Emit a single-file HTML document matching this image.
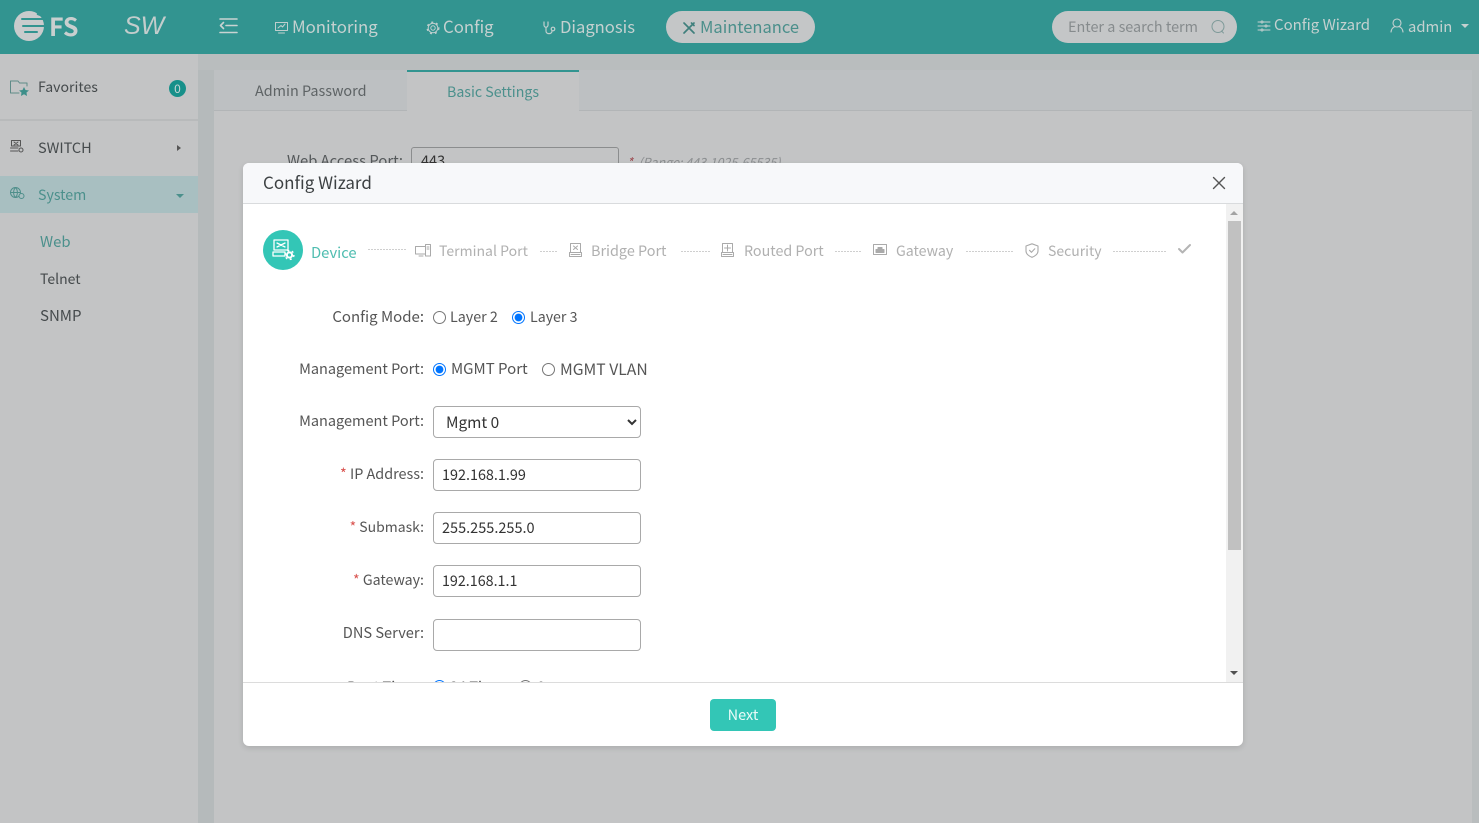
<!DOCTYPE html>
<html><head><meta charset="utf-8"><style>
html,body{margin:0;padding:0;width:1479px;height:823px;overflow:hidden;background:#c1c3c5}
*{box-sizing:border-box}
body{font-family:"Noto Sans CJK SC","Liberation Sans",sans-serif;position:relative}
.a{position:absolute}
.t{position:absolute;white-space:nowrap;line-height:20px;height:20px}
svg{position:absolute;overflow:visible;fill:none;stroke-linecap:round;stroke-linejoin:round}
.in{position:absolute;left:433px;width:208px;height:32px;border:1px solid #a9a9a9;border-radius:4px;background:#fff;color:#333;font:14.400px/30px "Noto Sans CJK SC","Liberation Sans",sans-serif;padding-left:8px}
.lb{position:absolute;right:1055px;color:#555;font-size:15px;line-height:20px;white-space:nowrap}
.lb i{color:#d9534f;font-style:normal}
input[type=radio]{position:absolute;margin:0;width:13px;height:13px;accent-color:#0075ff}
.d{position:absolute;top:251px;height:1px;background:repeating-linear-gradient(90deg,#cfcfcf 0 2px,transparent 2px 3px)}
.st{color:#b0b0b0;font-size:14.200px;top:241px}
</style></head><body>
<!-- header -->
<div class="a" style="left:0;top:0;width:1479px;height:54px;background:#329490"></div>
<svg style="left:14px;top:11px" width="32" height="30" viewBox="0 0 32 30"><circle cx="15" cy="15" r="15" fill="#c9cbcc"/><path d="M8 8H32M9 15H32M11 21H23" stroke="#329490" stroke-width="2"/><path d="M24 3L32 6" stroke="#329490" stroke-width="2.500"/></svg>
<div class="t" style="left:49px;top:16px;font-size:25px;font-weight:700;color:#c9cfcf">FS</div>
<div class="t" style="left:124px;top:16px;font-size:25px;font-style:italic;color:#c3cdcc;font-family:'Liberation Sans',sans-serif">SW</div>
<svg style="left:219px;top:18px" width="19" height="16" viewBox="0 0 19 16" stroke="#c9d3d2" stroke-width="1.600"><path d="M1 1H18M7 7.500H18M1 14.500H18M4.500 4.500L1.500 7.500L4.500 10.500"/></svg>
<svg style="left:275px;top:21px" width="13" height="13" viewBox="0 0 13 13" stroke="#c0cfce" stroke-width="1"><path d="M.5 1.500H12.500V9.500H.5ZM3 7L6 4.500L7.500 6L10 3M3.500 12H9.500"/></svg>
<div class="t" style="left:292px;top:16px;font-size:16.800px;color:#c5d1d0">Monitoring</div>
<svg style="left:426px;top:21px" width="14" height="14" viewBox="0 0 14 14" stroke="#c0cfce" stroke-width="1"><circle cx="7" cy="7" r="2.200"/><circle cx="7" cy="7" r="4.800"/><circle cx="7" cy="7" r="5.800" stroke-width="1.400" stroke-linecap="butt" stroke-dasharray="2 3.070"/></svg>
<div class="t" style="left:443px;top:16px;font-size:16.800px;color:#c5d1d0">Config</div>
<svg style="left:543px;top:21px" width="14" height="14" viewBox="0 0 14 14" stroke="#c0cfce" stroke-width="1.200"><path d="M1 1L1 4C1 7 5 7 5 4L5 1M3 7V10C3 13.500 9 13.500 9 10"/><circle cx="10" cy="8" r="1.800"/></svg>
<div class="t" style="left:560px;top:16px;font-size:16.600px;color:#c5d1d0">Diagnosis</div>
<div class="a" style="left:666px;top:11px;width:149px;height:32px;border-radius:16px;background:#c4c6c7"></div>
<svg style="left:683px;top:22px" width="12" height="12" viewBox="0 0 12 12" stroke="#3f7f7c" stroke-width="1.700"><path d="M1 1L11 11M11 1L1 11M8.500 1L11 3.500"/></svg>
<div class="t" style="left:700px;top:16px;font-size:16.500px;color:#4b8f8b">Maintenance</div>
<div class="a" style="left:1052px;top:11px;width:185px;height:32px;border-radius:16px;background:#c4c6c7"></div>
<div class="t" style="left:1068px;top:17px;font-size:14.400px;color:#868b8d">Enter a search term</div>
<svg style="left:1211px;top:20px" width="14" height="14" viewBox="0 0 14 14" stroke="#7e9a99" stroke-width="1"><circle cx="7" cy="6.500" r="6"/><path d="M10.500 11L12.500 13"/></svg>
<svg style="left:1258px;top:20px" width="12" height="12" viewBox="0 0 12 12" stroke="#c5d1d0" stroke-width="1"><path d="M0 2H12M0 6H12M0 10H12"/><circle cx="4" cy="2" r="1" fill="#329490"/><circle cx="8" cy="6" r="1" fill="#329490"/><circle cx="4" cy="10" r="1" fill="#329490"/></svg>
<div class="t" style="left:1274px;top:15px;font-size:15px;color:#c5d1d0">Config Wizard</div>
<svg style="left:1390px;top:18px" width="14" height="15" viewBox="0 0 14 15" stroke="#c5d1d0" stroke-width="1.100"><circle cx="7" cy="5" r="4"/><path d="M1 14C1.500 10.500 3.500 9 5 8.500M13 14C12.500 10.500 10.500 9 9 8.500"/></svg>
<div class="t" style="left:1408px;top:17px;font-size:14.800px;color:#c5d1d0">admin</div>
<div class="a" style="left:1461px;top:24px;border:4px solid transparent;border-top-color:#c5d1d0;border-bottom:0"></div>

<!-- sidebar -->
<div class="a" style="left:0;top:54px;width:198px;height:769px;background:#c3c4c5"></div>
<div class="a" style="left:198px;top:54px;width:16px;height:769px;background:#b5babb"></div>
<div class="a" style="left:198px;top:54px;width:1281px;height:16px;background:#b9bdbe"></div>
<div class="a" style="left:0;top:119px;width:198px;height:2px;background:#b8babb"></div>
<svg style="left:10px;top:80px" width="20" height="16" viewBox="0 0 20 16" stroke="#5f8b88" stroke-width="1"><path d="M.5 1H8L9.500 3H17V6M.5 1V13H9"/><path d="M14 7L15.500 10L19 10.500L16.500 12.500L17 16L14 14.300L11 16L11.500 12.500L9 10.500L12.500 10Z" fill="#3d8f8a" stroke="none"/></svg>
<div class="t" style="left:38px;top:77px;font-size:14.100px;color:#454a4c">Favorites</div>
<div class="a" style="left:169px;top:80px;width:17px;height:17px;border-radius:50%;background:#17908a;color:#c7d6d5;font-size:12px;line-height:17px;text-align:center">0</div>
<svg style="left:10px;top:140px" width="14" height="13" viewBox="0 0 14 13" stroke="#555" stroke-width="1"><path d="M1.500 .5H10.500V6H1.500ZM.5 8H8M.5 11H8M4 2L8 5M8 2L4 5"/><circle cx="11" cy="10" r="2"/></svg>
<div class="t" style="left:38px;top:138px;font-size:14.500px;color:#454a4c">SWITCH</div>
<div class="a" style="left:177px;top:145px;border:3px solid transparent;border-left:4px solid #555;border-right:0"></div>
<div class="a" style="left:0;top:176px;width:198px;height:37px;background:#a8bfc1"></div>
<svg style="left:10px;top:187px" width="15" height="13" viewBox="0 0 15 13" stroke="#4f8f8b" stroke-width="1"><circle cx="5.500" cy="5.500" r="5"/><path d="M.5 5.500H10.500M5.500 .5C3 3 3 8 5.500 10.500M5.500 .5C8 3 8 8 5.500 10.500"/><circle cx="11.500" cy="9" r="2.500" fill="#a8bfc1"/></svg>
<div class="t" style="left:38px;top:185px;font-size:14.200px;color:#4b908c">System</div>
<div class="a" style="left:176px;top:194px;border:4px solid transparent;border-top-color:#4b908c;border-bottom:0"></div>
<div class="t" style="left:40px;top:232px;font-size:14.900px;color:#4b908c">Web</div>
<div class="t" style="left:40px;top:269px;font-size:14px;color:#454a4c">Telnet</div>
<div class="t" style="left:40px;top:306px;font-size:15px;color:#454a4c">SNMP</div>

<!-- content -->
<div class="a" style="left:214px;top:70px;width:1258px;height:753px;background:#c3c4c5"></div>
<div class="a" style="left:1472px;top:70px;width:7px;height:753px;background:#b9bdbe"></div>
<div class="a" style="left:214px;top:70px;width:1258px;height:41px;background:#bdc0c2;border-bottom:1px solid #b2b5b7"></div>
<div class="a" style="left:407px;top:70px;width:172px;height:42px;background:#c3c4c5;border-top:2px solid #329490"></div>
<div class="t" style="left:255px;top:81px;font-size:14.400px;color:#5e6365">Admin Password</div>
<div class="t" style="left:447px;top:82px;font-size:14.200px;color:#4b908c">Basic Settings</div>
<div class="t" style="left:287px;top:151px;font-size:14.800px;color:#54585a">Web Access Port:</div>
<div class="a" style="left:411px;top:147px;width:208px;height:40px;border:1px solid #8b8d8e;border-radius:3px"></div>
<div class="t" style="left:421px;top:151px;font-size:14.500px;color:#333">443</div>
<div class="t" style="left:627px;top:152px;font-size:12.500px;font-style:italic;color:#8b8e90"><span style="color:#9c4a50">*</span>&nbsp; (Range: 443,1025-65535)</div>

<!-- modal -->
<div class="a" style="left:243px;top:163px;width:1000px;height:583px;background:#fff;border-radius:6px;box-shadow:0 2px 6px rgba(0,0,0,.12);overflow:hidden">
 <div class="a" style="left:0;top:0;width:1000px;height:41px;background:#f7f8fa;border-bottom:1px solid #d9dbdd"></div>
 <div class="a" style="left:983px;top:41px;width:17px;height:478px;background:#f1f1f1"></div>
 <div class="a" style="left:985px;top:58px;width:13px;height:329px;background:#c1c1c1"></div>
 <div class="a" style="left:987px;top:48px;border:4px solid transparent;border-bottom-color:#a3a3a3;border-top:0"></div>
 <div class="a" style="left:987px;top:508px;border:4px solid transparent;border-top-color:#505050;border-bottom:0"></div>
 <div class="a" style="left:0;top:519px;width:1000px;height:1px;background:#dcdcdc"></div>
</div>
<div class="t" style="left:263px;top:172px;font-size:17px;color:#3d4143">Config Wizard</div>
<svg style="left:1213px;top:177px" width="12" height="12" viewBox="0 0 12 12" stroke="#555" stroke-width="1.400"><path d="M.5 .5L11.500 11.500M11.500 .5L.5 11.500"/></svg>

<!-- steps -->
<div class="a" style="left:263px;top:230px;width:40px;height:40px;border-radius:50%;background:#33c6b6"></div>
<svg style="left:272px;top:239px" width="23" height="22" viewBox="0 0 23 22" stroke="#fff" stroke-width="1.300"><path d="M2 1H16V11H2ZM1 13H13V17H1ZM5 4L13 8M13 4L5 8"/><circle cx="17.500" cy="16" r="2.600" stroke-width="2"/><circle cx="17.500" cy="16" r="4.400" stroke-width="1.500" stroke-linecap="butt" stroke-dasharray="2 2.600"/></svg>
<div class="t" style="left:311px;top:243px;font-size:14.800px;color:#4fbdb0">Device</div>
<div class="d" style="left:368px;width:38px;top:249px"></div>
<svg style="left:415px;top:244px" width="16" height="13" viewBox="0 0 16 13" stroke="#aaa" stroke-width="1"><path d="M.5 2.500H10.500V10H.5ZM4 12H8M10.500 .5H15.500V12H10.500ZM12 3H14M12 5H14"/></svg>
<div class="t st" style="left:439px;font-size:14.050px">Terminal Port</div>
<div class="d" style="left:540px;width:18px"></div>
<svg style="left:569px;top:243px" width="13" height="14" viewBox="0 0 13 14" stroke="#aaa" stroke-width="1"><path d="M1.500 .5H11.500V9.500H1.500ZM.5 9.500H12.500V13.500H.5ZM4.500 3L8.500 6.500M8.500 3L4.500 6.500M2 11.500H11"/></svg>
<div class="t st" style="left:591px;font-size:14.400px">Bridge Port</div>
<div class="d" style="left:681px;width:29px"></div>
<svg style="left:721px;top:243px" width="13" height="14" viewBox="0 0 13 14" stroke="#aaa" stroke-width="1"><path d="M1.500 .5H11.500V9.500H1.500ZM.5 9.500H12.500V13.500H.5ZM6.500 2V8M3.500 5H9.500M2 11.500H11"/></svg>
<div class="t st" style="left:744px;font-size:14.300px">Routed Port</div>
<div class="d" style="left:835px;width:27px"></div>
<svg style="left:873px;top:244px" width="14" height="11" viewBox="0 0 14 11" stroke="#aaa" stroke-width="1"><path d="M.5 .5H13.500V10.500H.5Z"/><path d="M3 8.500V5.500H5V3.500H9V5.500H11V8.500Z" fill="#aaa"/></svg>
<div class="t st" style="left:896px">Gateway</div>
<div class="d" style="left:966px;width:48px"></div>
<svg style="left:1025px;top:243px" width="14" height="15" viewBox="0 0 14 15" stroke="#aaa" stroke-width="1.100"><path d="M7 .8L13 3V8C13 11 10 13.300 7 14.300C4 13.300 1 11 1 8V3ZM4.500 7.300L6.500 9.300L9.800 5.800"/></svg>
<div class="t st" style="left:1048px;font-size:14px">Security</div>
<div class="d" style="left:1113px;width:53px"></div>
<svg style="left:1178px;top:244px" width="13" height="10" viewBox="0 0 13 10" stroke="#b4b4b4" stroke-width="2"><path d="M1 5L4.500 8.500L12 1"/></svg>

<!-- form -->
<div class="lb" style="top:307px">Config Mode:</div>
<input type="radio" name="m" style="left:433px;top:311px"><div class="t" style="left:450px;top:307px;font-size:14.300px;color:#555">Layer 2</div>
<input type="radio" name="m" checked style="left:512px;top:311px"><div class="t" style="left:530px;top:307px;font-size:14.200px;color:#555">Layer 3</div>
<div class="lb" style="top:359px;font-size:14.500px">Management Port:</div>
<input type="radio" name="p" checked style="left:433px;top:363px"><div class="t" style="left:451px;top:359px;font-size:15px;color:#555">MGMT Port</div>
<input type="radio" name="p" style="left:542px;top:363px"><div class="t" style="left:560px;top:359px;font-size:15.700px;color:#555">MGMT VLAN</div>
<div class="lb" style="top:411px;font-size:14.500px">Management Port:</div>
<select class="in" style="top:406px;padding-left:8px;font-size:15.400px;line-height:28px"><option>Mgmt 0</option></select>
<div class="lb" style="top:464px;font-size:14.400px"><i>*</i> IP Address:</div>
<div class="in" style="top:459px">192.168.1.99</div>
<div class="lb" style="top:517px;font-size:14px"><i>*</i> Submask:</div>
<div class="in" style="top:512px;font-size:14.500px">255.255.255.0</div>
<div class="lb" style="top:570px;font-size:14.200px"><i>*</i> Gateway:</div>
<div class="in" style="top:565px;font-size:14.300px">192.168.1.1</div>
<div class="lb" style="top:623px;font-size:14.600px">DNS Server:</div>
<div class="in" style="top:619px"></div>

<!-- clipped row -->
<div class="a" style="left:243px;top:676px;width:983px;height:6px;overflow:hidden">
 <div class="t" style="left:104px;top:1px;font-size:14.500px;color:#555">Boot Time:</div>
 <input type="radio" checked style="left:190px;top:4px">
 <div class="t" style="left:207px;top:1px;font-size:14.500px;color:#555">24 Time</div>
 <input type="radio" style="left:276px;top:4px">
 <div class="t" style="left:294px;top:1px;font-size:14.500px;color:#555">0</div>
</div>

<div class="a" style="left:710px;top:699px;width:66px;height:32px;border-radius:4px;background:#33c6b6;color:#e9fbf8;font-size:14.500px;line-height:32px;text-align:center">Next</div>
</body></html>
